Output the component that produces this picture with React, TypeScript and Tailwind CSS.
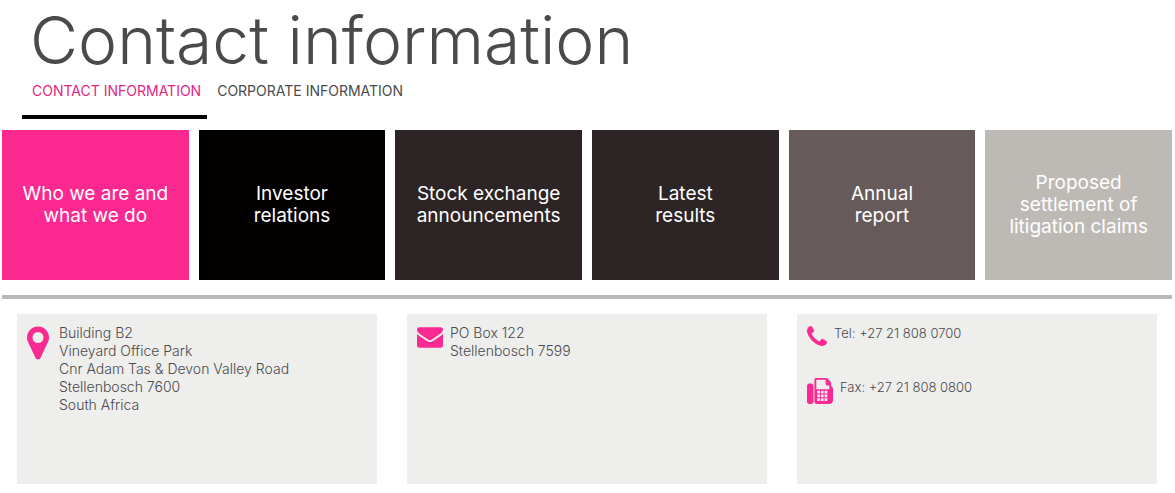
import type { ReactNode } from 'react'

const tabs = [
  { label: 'Contact information', active: true },
  { label: 'Corporate information', active: false },
]

const tiles = [
  { lines: ['Who we are and', 'what we do'], color: 'bg-[#fb2890]' },
  { lines: ['Investor', 'relations'], color: 'bg-[#020001]' },
  { lines: ['Stock exchange', 'announcements'], color: 'bg-[#2d2425]' },
  { lines: ['Latest', 'results'], color: 'bg-[#2d2425]' },
  { lines: ['Annual', 'report'], color: 'bg-[#665b5a]' },
  { lines: ['Proposed', 'settlement of', 'litigation claims'], color: 'bg-[#bdbab5]' },
]

function MarkerIcon() {
  return (
    <svg viewBox="0 128 1024 1536" className="mt-[2px] h-[34px] w-[22px] shrink-0 fill-current" aria-hidden="true">
      <path d="M768 640q0-106-75-181t-181-75-181 75-75 181 75 181 181 75 181-75 75-181zm256 0q0 109-33 179l-364 774q-16 33-47.5 52t-67.5 19-67.5-19-46.5-52l-365-774q-33-70-33-179 0-212 150-362t362-150 362 150 150 362z" />
    </svg>
  )
}

function EnvelopeIcon() {
  return (
    <svg viewBox="0 256 1792 1408" className="mt-[3px] h-[21px] w-[26px] shrink-0 fill-current" aria-hidden="true">
      <path d="M1792 710v794q0 66-47 113t-113 47h-1472q-66 0-113-47t-47-113v-794q44 49 101 87 362 246 497 345 57 42 92.5 65.5t94.5 48 110 24.5h2q51 0 110-24.5t94.5-48 92.5-65.5q170-123 498-345 57-39 100-87zm0-294q0 79-49 151t-122 123q-376 261-468 325-10 7-42.5 31t-54 38.5-52 32.5-57.5 27-50 9h-2q-23 0-50-9t-57.5-27-52-32.5-54-38.5-42.5-31q-91-64-262-182.5t-205-142.5q-62-42-117-115.5t-55-136.5q0-78 41.5-130t118.5-52h1472q65 0 112.5 47t47.5 113z" />
    </svg>
  )
}

function PhoneIcon() {
  return (
    <svg viewBox="192 128 1408 1408" className="mt-[2px] h-5 w-5 shrink-0 fill-current" aria-hidden="true">
      <path d="M1600 1240q0 27-10 70.5t-21 68.5q-21 50-122 106-94 51-186 51-27 0-53-3.5t-57.5-12.5-47-14.5-55.5-20.5-49-18q-98-35-175-83-127-79-264-216t-216-264q-48-77-83-175-3-9-18-49t-20.5-55.5-14.5-47-12.5-57.5-3.5-53q0-92 51-186 56-101 106-122 25-11 68.5-21t70.5-10q14 0 21 3 18 6 53 76 11 19 30 54t35 63.5 31 53.5q3 4 17.5 25t21.5 35.5 7 28.5q0 20-28.5 50t-62 55-62 53-28.5 46q0 9 5 22.5t8.5 20.5 14 24 11.5 19q76 137 174 235t235 174q2 1 19 11.5t24 14 20.5 8.5 22.5 5q18 0 46-28.5t53-62 55-62 50-28.5q14 0 28.5 7t35.5 21.5 25 17.5q25 15 53.5 31t63.5 35 54 30q70 35 76 53 3 7 3 21z" />
    </svg>
  )
}

function FaxIcon() {
  return (
    <svg viewBox="0 0 1792 1792" className="h-[26px] w-[26px] shrink-0 fill-current" aria-hidden="true">
      <path d="M288 384q66 0 113 47t47 113v1088q0 66-47 113t-113 47h-128q-66 0-113-47t-47-113v-1088q0-66 47-113t113-47z" />
      <path
        fillRule="evenodd"
        d="M1664 547q58 34 93 93t35 128v768q0 106-75 181t-181 75h-864q-66 0-113-47t-47-113v-1536q0-40 28-68t68-28h672q40 0 88 20t76 48l152 152q28 28 48 76t20 88zM640 128v640h896v-256h-160q-40 0-68-28t-28-68v-288zM700 880h190v190h-190zM955 880h190v190h-190zM1210 880h190v190h-190zM700 1135h190v190h-190zM955 1135h190v190h-190zM1210 1135h190v190h-190zM700 1390h190v190h-190zM955 1390h190v190h-190zM1210 1390h190v190h-190z"
      />
    </svg>
  )
}

function ContactCard({ children }: { children: ReactNode }) {
  return <div className="min-h-[170px] bg-[#eeeeec] p-2.5 text-[#f92a92]">{children}</div>
}

export default function App() {
  return (
    <main className="bg-white pb-2 pl-0.5 pr-[3px] font-['Inter',sans-serif] text-[#4a4a4c]">
      <h1 className="pl-7 pt-1 text-[66px] font-light leading-[72px]">Contact information</h1>

      <nav className="flex pl-5">
        {tabs.map((tab) => (
          <a
            key={tab.label}
            href="#"
            className={`border-b-4 pb-[15px] pl-2.5 pr-1.5 pt-[5px] text-sm leading-[19px] uppercase ${
              tab.active ? 'border-black text-[#e0267f]' : 'border-transparent'
            }`}
          >
            {tab.label}
          </a>
        ))}
      </nav>

      <div className="mt-[11px] grid grid-cols-6 gap-2.5">
        {tiles.map((tile) => (
          <a
            key={tile.lines[0]}
            href="#"
            className={`flex h-[150px] flex-col items-center justify-center whitespace-nowrap text-[19px] leading-[22px] text-white ${tile.color}`}
          >
            {tile.lines.map((line) => (
              <span key={line}>{line}</span>
            ))}
          </a>
        ))}
      </div>

      <hr className="mt-[15px] border-t-4 border-[#bab9b7]" />

      <div className="mt-[15px] grid grid-cols-3 gap-[30px] px-[15px]">
        <ContactCard>
          <div className="flex gap-2.5">
            <MarkerIcon />
            <address className="text-sm font-light not-italic leading-[18px] text-[#4a4a4c]">
              Building B2
              <br />
              Vineyard Office Park
              <br />
              Cnr Adam Tas &amp; Devon Valley Road
              <br />
              Stellenbosch 7600
              <br />
              South Africa
            </address>
          </div>
        </ContactCard>

        <ContactCard>
          <div className="flex gap-[7px]">
            <EnvelopeIcon />
            <address className="text-sm font-light not-italic leading-[18px] text-[#4a4a4c]">
              PO Box 122
              <br />
              Stellenbosch 7599
            </address>
          </div>
        </ContactCard>

        <ContactCard>
          <div className="flex gap-[7px]">
            <PhoneIcon />
            <p className="text-[13px] font-light leading-[18px] text-[#4a4a4c]">Tel: +27 21 808 0700</p>
          </div>
          <div className="mt-8 flex gap-[7px]">
            <FaxIcon />
            <p className="text-[13px] font-light leading-[18px] text-[#4a4a4c]">Fax: +27 21 808 0800</p>
          </div>
        </ContactCard>
      </div>
    </main>
  )
}
